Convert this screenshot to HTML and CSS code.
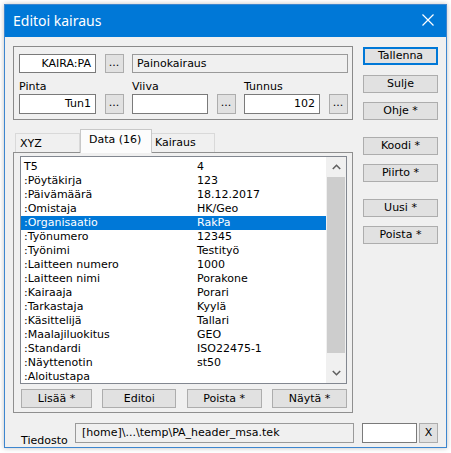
FILE: index.html
```html
<!DOCTYPE html>
<html>
<head>
<meta charset="utf-8">
<link rel="stylesheet" href="styles.css">
</head>
<body>
<div class="window">
  <div class="titlebar">
    <span class="title">Editoi kairaus</span>
    <svg class="close" width="12" height="12" viewBox="0 0 12 12"><path d="M0.5 0.5 L11.5 11.5 M11.5 0.5 L0.5 11.5" stroke="#fff" stroke-width="1.2" fill="none"/></svg>
  </div>
  <div class="client">
    <div class="main">
      <div class="group">
        <div class="field right">KAIRA:PA</div>
        <div class="btn dots">...</div>
        <div class="field ro span4">Painokairaus</div>
        <div class="label c1">Pinta</div>
        <div class="label c3">Viiva</div>
        <div class="label c5">Tunnus</div>
        <div class="field right tall">Tun1</div>
        <div class="btn dots tall">...</div>
        <div class="field tall"></div>
        <div class="btn dots tall">...</div>
        <div class="field right tall">102</div>
        <div class="btn dots tall">...</div>
      </div>
      <div class="tabs">
        <div class="tab t-xyz">XYZ</div>
        <div class="tab active t-data">Data (16)</div>
        <div class="tab t-kai">Kairaus</div>
      </div>
      <div class="panel">
        <div class="list">
          <div class="rows">
            <div class="row"><span class="k">T5</span><span class="v">4</span></div>
            <div class="row"><span class="k">:Pöytäkirja</span><span class="v">123</span></div>
            <div class="row"><span class="k">:Päivämäärä</span><span class="v">18.12.2017</span></div>
            <div class="row"><span class="k">:Omistaja</span><span class="v">HK/Geo</span></div>
            <div class="row sel"><span class="k">:Organisaatio</span><span class="v">RakPa</span></div>
            <div class="row"><span class="k">:Työnumero</span><span class="v">12345</span></div>
            <div class="row"><span class="k">:Työnimi</span><span class="v">Testityö</span></div>
            <div class="row"><span class="k">:Laitteen numero</span><span class="v">1000</span></div>
            <div class="row"><span class="k">:Laitteen nimi</span><span class="v">Porakone</span></div>
            <div class="row"><span class="k">:Kairaaja</span><span class="v">Porari</span></div>
            <div class="row"><span class="k">:Tarkastaja</span><span class="v">Kyylä</span></div>
            <div class="row"><span class="k">:Käsittelijä</span><span class="v">Tallari</span></div>
            <div class="row"><span class="k">:Maalajiluokitus</span><span class="v">GEO</span></div>
            <div class="row"><span class="k">:Standardi</span><span class="v">ISO22475-1</span></div>
            <div class="row"><span class="k">:Näyttenotin</span><span class="v">st50</span></div>
            <div class="row"><span class="k">:Aloitustapa</span><span class="v"></span></div>
          </div>
          <div class="scrollbar">
            <div class="arrow"><svg width="9" height="6" viewBox="0 0 9 6"><path d="M0.8 5 L4.5 1.3 L8.2 5" stroke="#606060" stroke-width="1.6" fill="none"/></svg></div>
            <div class="thumb"></div>
            <div class="track"></div>
            <div class="arrow"><svg width="9" height="6" viewBox="0 0 9 6"><path d="M0.8 1 L4.5 4.7 L8.2 1" stroke="#606060" stroke-width="1.6" fill="none"/></svg></div>
          </div>
        </div>
        <div class="actions">
          <div class="btn act">Lisää *</div>
          <div class="btn act">Editoi</div>
          <div class="btn act">Poista *</div>
          <div class="btn act">Näytä *</div>
        </div>
      </div>
    </div>
    <div class="side">
      <div class="btn sb default">Tallenna</div>
      <div class="btn sb">Sulje</div>
      <div class="btn sb">Ohje *</div>
      <div class="btn sb sep">Koodi *</div>
      <div class="btn sb">Piirto *</div>
      <div class="btn sb sep">Uusi *</div>
      <div class="btn sb">Poista *</div>
    </div>
    <div class="footer">
      <div class="flabel">Tiedosto</div>
      <div class="field ro path">[home]\...\temp\PA_header_msa.tek</div>
      <div class="field small"></div>
      <div class="btn xbtn">X</div>
    </div>
  </div>
</div>
</body>
</html>
```

FILE: styles.css
```css
* { box-sizing: border-box; }
html, body { margin: 0; padding: 0; background: #ffffff; }
body { width: 451px; height: 453px; overflow: hidden; }

.window {
  margin: 4px 0 0 4px;
  width: 443px;
  height: 444px;
  border: 1px solid #3d86cf;
  background: #f0f0f0;
  box-shadow: 0 0 5px rgba(0,0,0,0.25);
  font-family: "DejaVu Sans", sans-serif;
  font-size: 11px;
  color: #000;
}

.titlebar {
  height: 32px;
  background: #0078d7;
  display: flex;
  align-items: center;
  justify-content: space-between;
  padding: 0 12px 0 8px;
}
.title {
  font-family: "Noto Sans", "Open Sans", sans-serif;
  font-size: 14px;
  color: #fff;
  position: relative;
  top: -1px;
}
.close { position: relative; top: -1px; }

.client {
  display: grid;
  grid-template-columns: 340px 75px;
  column-gap: 10px;
  padding: 9px 0 0 8px;
}

.main { display: flex; flex-direction: column; }

.group {
  height: 74px;
  border: 1px solid #8a8a8a;
  padding: 7px 0 0 5px;
  display: grid;
  grid-template-columns: 77px 19px 76px 19px 76px 19px;
  grid-template-rows: 19px 21px 20px;
  column-gap: 8.5px;
}
.field {
  background: #fff;
  border: 1px solid #7a7a7a;
  height: 100%;
  padding: 0 4px;
  line-height: 17px;
  white-space: nowrap;
  overflow: hidden;
}
.field.tall { line-height: 18px; }
.field.right { text-align: right; }
.field.ro { background: #f0f0f0; border-color: #9a9a9a; }
.span4 { grid-column: 3 / 7; }
.label { align-self: end; line-height: 13px; padding-bottom: 1px; }
.c1 { grid-column: 1; }
.c3 { grid-column: 3; }
.c5 { grid-column: 5 / 7; }

.btn {
  background: #e1e1e1;
  border: 1px solid #adadad;
  text-align: center;
  white-space: nowrap;
}
.dots { line-height: 15px; }
.dots.tall { line-height: 16px; }

.tabs {
  margin-top: 9px;
  height: 23px;
  display: flex;
  align-items: flex-end;
  padding-left: 2px;
  position: relative;
  z-index: 1;
}
.tab {
  height: 19px;
  border: 1px solid #d9d9d9;
  border-bottom: none;
  background: #f0f0f0;
  line-height: 18px;
  padding-left: 4px;
}
.t-xyz { width: 65px; padding-left: 4px; line-height: 19px; }
.t-kai { width: 63px; border-left: none; padding-left: 3px; }
.tab.active {
  height: 24px;
  margin-bottom: -1px;
  background: #fcfcfc;
  border-color: #c8c8c8;
  width: 72px;
  padding-left: 8px;
  line-height: 20px;
}

.panel {
  height: 261px;
  border: 1px solid #8f8f8f;
  padding: 3px 5px 0 6px;
  display: flex;
  flex-direction: column;
}
.list {
  height: 228px;
  background: #fff;
  border: 1px solid #828790;
  display: flex;
}
.rows { flex: 1; padding-top: 3px; overflow: hidden; }
.row {
  height: 14px;
  line-height: 14px;
  display: flex;
  padding-left: 3px;
  white-space: nowrap;
}
.row .k { width: 173px; }
.row.sel { background: #0078d7; color: #fff; }

.scrollbar {
  width: 20px;
  background: #f0f0f0;
  display: flex;
  flex-direction: column;
}
.arrow {
  height: 20px;
  display: flex;
  align-items: center;
  justify-content: center;
}
.thumb { height: 176px; background: #cdcdcd; margin: 0 1px; }
.track { flex: 1; }

.actions {
  margin-top: 5px;
  display: grid;
  grid-template-columns: 71px 74px 75px 75px;
  justify-content: space-between;
  padding-left: 1px;
}
.act { height: 19px; line-height: 17px; }

.side { display: flex; flex-direction: column; padding-top: 1px; }
.sb { height: 18px; line-height: 16px; margin-bottom: 9.5px; }
.sb.sep { margin-top: 7px; }
.sb.default { border: 2px solid #0078d7; line-height: 14px; }

.footer {
  grid-column: 1 / 3;
  margin-top: 10px;
  display: flex;
  align-items: stretch;
  height: 20px;
}
.flabel { width: 62px; padding-left: 8px; line-height: 13px; align-self: flex-end; margin-bottom: -4px; }
.path { width: 279px; padding-left: 6px; line-height: 18px; }
.small { width: 55px; margin-left: 8px; }
.xbtn { width: 19px; margin-left: 2px; line-height: 18px; }
```
